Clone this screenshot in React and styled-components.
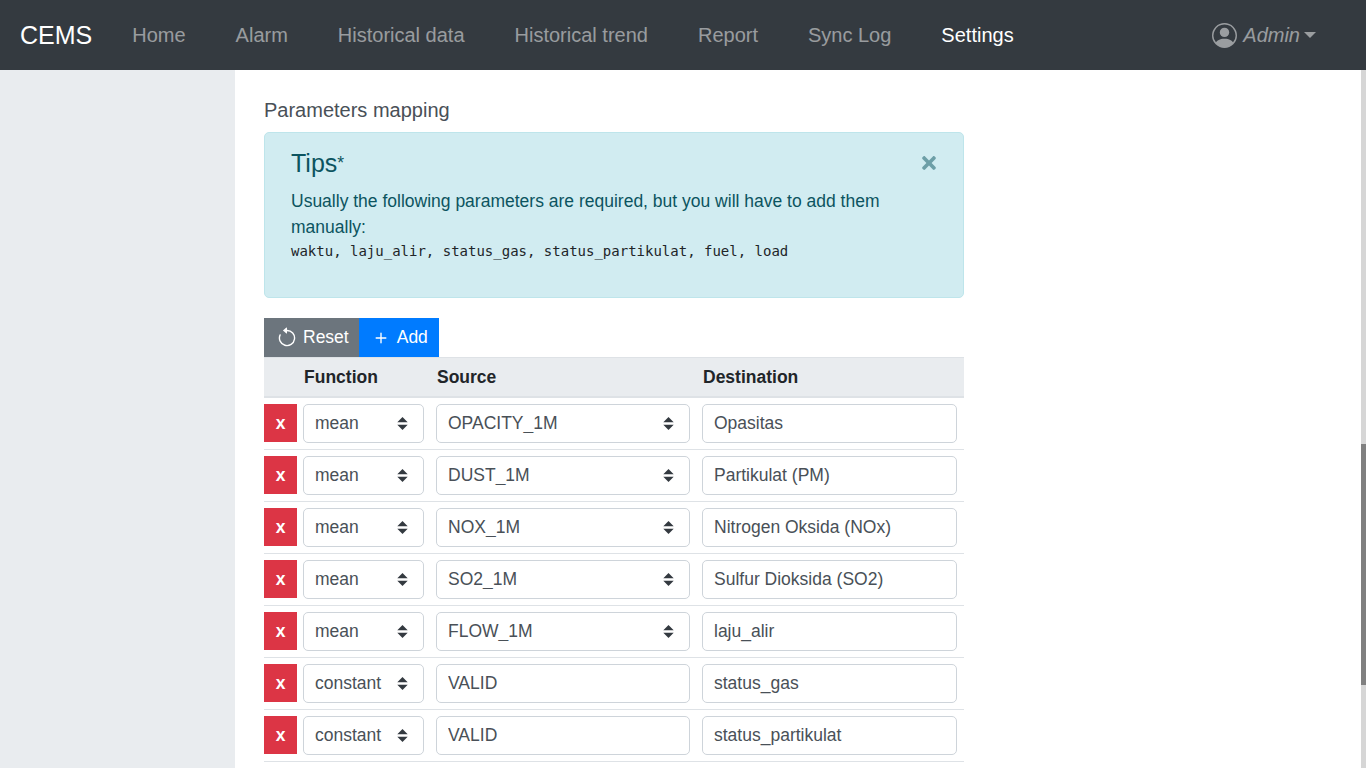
import styled, { createGlobalStyle } from "styled-components";
import { BsPersonCircle, BsArrowCounterclockwise, BsPlus } from "react-icons/bs";
import { FaTimes } from "react-icons/fa";

const GlobalStyle = createGlobalStyle`
  html, body {
    margin: 0;
    height: 100%;
    overflow: hidden;
  }
  body {
    font-family: "Liberation Sans", Arial, sans-serif;
    font-size: 17.5px;
    color: #495057;
    background: #fff;
  }
  * {
    box-sizing: border-box;
  }
`;

const Page = styled.div`
  display: flex;
  flex-direction: column;
  height: 100vh;
`;

const Navbar = styled.nav`
  display: flex;
  align-items: center;
  flex: 0 0 70px;
  padding: 0 50px 0 20px;
  background-color: #343a40;
`;

const Brand = styled.a`
  font-size: 25px;
  color: #fff;
  margin-right: 40px;
`;

const NavLinks = styled.div`
  display: flex;
  gap: 50px;
  flex: 1;
`;

const NavLink = styled.a`
  font-size: 20px;
  color: ${(p) => (p.$active ? "#fff" : "rgba(255, 255, 255, 0.5)")};
`;

const UserMenu = styled.div`
  display: flex;
  align-items: center;
  font-size: 20px;
  font-style: italic;
  color: rgba(255, 255, 255, 0.5);
  svg {
    margin-right: 6px;
  }
`;

const Caret = styled.span`
  width: 0;
  height: 0;
  margin-left: 4px;
  border-top: 6px solid rgba(255, 255, 255, 0.5);
  border-left: 6px solid transparent;
  border-right: 6px solid transparent;
`;

const Body = styled.div`
  display: flex;
  flex: 1;
  min-height: 0;
`;

const Sidebar = styled.aside`
  flex: 0 0 235px;
  background-color: #e9ecef;
`;

const Main = styled.main`
  flex: 1;
  overflow: hidden;
  padding: 28px 0 0 29px;
`;

const Track = styled.div`
  flex: 0 0 5px;
  background-color: #d6d6d6;
  padding-top: 374px;
`;

const Thumb = styled.div`
  height: 241px;
  background-color: #808080;
`;

const Section = styled.section`
  width: 700px;
`;

const SectionTitle = styled.div`
  font-size: 20px;
  line-height: 24px;
  margin-bottom: 10px;
`;

const Alert = styled.div`
  position: relative;
  height: 166px;
  padding: 15px 26px 0;
  margin-bottom: 20px;
  color: #0c5460;
  background-color: #d1ecf1;
  border: 1px solid #bee5eb;
  border-radius: 5px;
`;

const AlertTitle = styled.h4`
  margin: 0 0 10px;
  font-size: 25px;
  line-height: 30px;
  font-weight: 400;
`;

const Star = styled.span`
  font-size: 17.5px;
  line-height: 0;
  vertical-align: 3px;
`;

const AlertText = styled.p`
  margin: 0;
  line-height: 26px;
`;

const Code = styled.code`
  display: block;
  font-family: "DejaVu Sans Mono", monospace;
  font-size: 14px;
  line-height: 22px;
  color: #212529;
`;

const CloseButton = styled.span`
  position: absolute;
  top: 20px;
  right: 24px;
  display: flex;
  color: #0c5460;
  opacity: 0.5;
`;

const Toolbar = styled.div`
  display: flex;
  height: 39px;
`;

const ToolButton = styled.button`
  display: flex;
  align-items: center;
  height: 39px;
  border: 0;
  padding: ${(p) => p.$padding};
  font: inherit;
  color: #fff;
  background-color: ${(p) => p.$bg};
  svg {
    margin-right: 5px;
  }
`;

const HeaderRow = styled.div`
  display: grid;
  grid-template-columns: 27px 121px 254px 255px;
  column-gap: 12px;
  align-items: center;
  height: 41px;
  padding-top: 1px;
  font-weight: 700;
  color: #212529;
  background-color: #e9ecef;
  border-top: 1px solid #dee2e6;
  border-bottom: 2px solid #dee2e6;
  span {
    padding-left: 1px;
  }
`;

const Row = styled.div`
  display: grid;
  grid-template-columns: 27px 121px 254px 255px;
  column-gap: 12px;
  align-items: start;
  height: 52px;
  padding-top: 6px;
  border-bottom: 1px solid #dee2e6;
`;

const RemoveButton = styled.button`
  width: 33px;
  height: 38px;
  border: 0;
  padding: 0;
  font: inherit;
  font-weight: 700;
  color: #fff;
  background-color: #dc3545;
`;

const controlStyle = `
  display: block;
  width: 100%;
  height: 39px;
  padding: 0 11px;
  font: inherit;
  color: #495057;
  background-color: #fff;
  border: 1px solid #ced4da;
  border-radius: 5px;
  outline: none;
`;

const Select = styled.select`
  ${controlStyle}
  padding-bottom: 2px;
  appearance: none;
  background-image: url("data:image/svg+xml,%3csvg xmlns='http://www.w3.org/2000/svg' viewBox='0 0 4 5'%3e%3cpath fill='%23343a40' d='M2 0L0 2h4zm0 5L0 3h4z'/%3e%3c/svg%3e");
  background-repeat: no-repeat;
  background-position: right 15px center;
  background-size: 11px 13px;
`;

const Input = styled.input`
  ${controlStyle}
`;

const rows = [
  { fn: "mean", source: "OPACITY_1M", dest: "Opasitas" },
  { fn: "mean", source: "DUST_1M", dest: "Partikulat (PM)" },
  { fn: "mean", source: "NOX_1M", dest: "Nitrogen Oksida (NOx)" },
  { fn: "mean", source: "SO2_1M", dest: "Sulfur Dioksida (SO2)" },
  { fn: "mean", source: "FLOW_1M", dest: "laju_alir" },
  { fn: "constant", source: "VALID", dest: "status_gas" },
  { fn: "constant", source: "VALID", dest: "status_partikulat" },
];

const links = ["Home", "Alarm", "Historical data", "Historical trend", "Report", "Sync Log", "Settings"];

const App = () => {
  return (
    <Page>
      <GlobalStyle />
      <Navbar>
        <Brand>CEMS</Brand>
        <NavLinks>
          {links.map((link) => (
            <NavLink key={link} $active={link === "Settings"}>
              {link}
            </NavLink>
          ))}
        </NavLinks>
        <UserMenu>
          <BsPersonCircle size={25} />
          Admin
          <Caret />
        </UserMenu>
      </Navbar>
      <Body>
        <Sidebar />
        <Main>
          <Section>
            <SectionTitle>Parameters mapping</SectionTitle>
            <Alert>
              <AlertTitle>
                Tips<Star>*</Star>
              </AlertTitle>
              <AlertText>
                Usually the following parameters are required, but you will have to add them manually:
              </AlertText>
              <Code>waktu, laju_alir, status_gas, status_partikulat, fuel, load</Code>
              <CloseButton>
                <FaTimes size={20} />
              </CloseButton>
            </Alert>
            <Toolbar>
              <ToolButton $bg="#6c757d" $padding="0 10px 0 12px">
                <BsArrowCounterclockwise size={22} />
                Reset
              </ToolButton>
              <ToolButton $bg="#007bff" $padding="0 11px 0 11px">
                <BsPlus size={22} />
                Add
              </ToolButton>
            </Toolbar>
            <HeaderRow>
              <span />
              <span>Function</span>
              <span>Source</span>
              <span>Destination</span>
            </HeaderRow>
            {rows.map((row, i) => (
              <Row key={i}>
                <RemoveButton>x</RemoveButton>
                <Select defaultValue={row.fn}>
                  <option>mean</option>
                  <option>constant</option>
                </Select>
                {row.fn === "mean" ? (
                  <Select defaultValue={row.source}>
                    <option>{row.source}</option>
                  </Select>
                ) : (
                  <Input readOnly value={row.source} />
                )}
                <Input readOnly value={row.dest} />
              </Row>
            ))}
          </Section>
        </Main>
        <Track>
          <Thumb />
        </Track>
      </Body>
    </Page>
  );
};

export default App;
